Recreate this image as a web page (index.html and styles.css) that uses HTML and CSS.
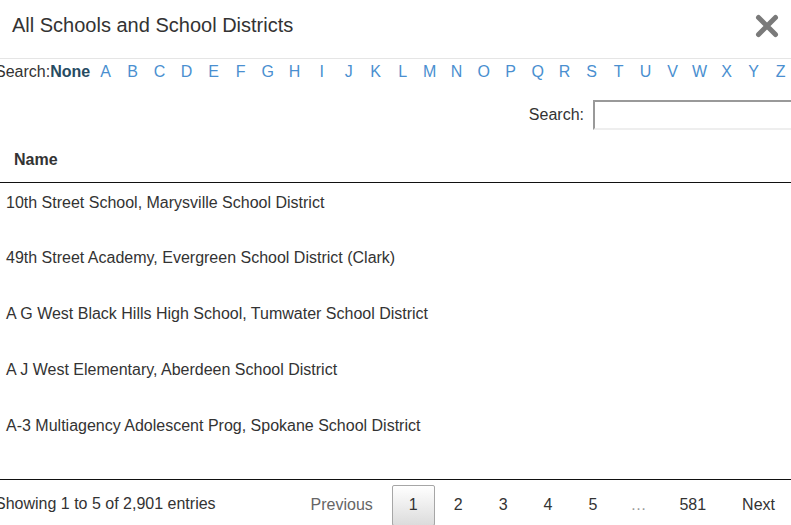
FILE: index.html
```html
<!DOCTYPE html>
<html lang="en">
  <head>
    <meta charset="utf-8">
    <meta name="viewport" content="width=device-width, initial-scale=1.0">
    <title>All Schools and School Districts</title>
    <link rel="stylesheet" href="styles.css">
  </head>
  <body>
    <div class="modal-header">
      <h4 class="modal-title">All Schools and School Districts</h4>
      <a class="close" aria-label="Close">
        <svg width="24" height="24" viewBox="0 0 24 24">
          <path d="M3.5 3.5 L20.5 20.5 M20.5 3.5 L3.5 20.5" stroke="#7a7a7a" stroke-width="5" stroke-linecap="round"/>
        </svg>
      </a>
    </div>
    <div class="modal-body">
      <div class="alpha">
        <span>Search:</span><b class="alpha-none">None</b>
        <div class="alpha-list">
          <a>A</a><a>B</a><a>C</a><a>D</a><a>E</a><a>F</a><a>G</a><a>H</a><a>I</a><a>J</a><a>K</a><a>L</a><a>M</a><a>N</a><a>O</a><a>P</a><a>Q</a><a>R</a><a>S</a><a>T</a><a>U</a><a>V</a><a>W</a><a>X</a><a>Y</a><a>Z</a>
        </div>
      </div>
      <div class="filter">
        <label>Search:<input type="search"></label>
      </div>
      <div class="scroll">
        <table class="data">
          <thead>
            <tr><th>Name</th></tr>
          </thead>
          <tbody>
            <tr><td>10th Street School, Marysville School District</td></tr>
            <tr><td>49th Street Academy, Evergreen School District (Clark)</td></tr>
            <tr><td>A G West Black Hills High School, Tumwater School District</td></tr>
            <tr><td>A J West Elementary, Aberdeen School District</td></tr>
            <tr><td>A-3 Multiagency Adolescent Prog, Spokane School District</td></tr>
          </tbody>
        </table>
      </div>
      <div class="footer">
        <div class="info">Showing 1 to 5 of 2,901 entries</div>
        <div class="paging">
          <a class="pg pg-disabled">Previous</a>
          <a class="pg pg-current">1</a>
          <a class="pg">2</a>
          <a class="pg">3</a>
          <a class="pg">4</a>
          <a class="pg">5</a>
          <span class="ellipsis">…</span>
          <a class="pg">581</a>
          <a class="pg">Next</a>
        </div>
      </div>
    </div>
  </body>
</html>
```

FILE: styles.css
```css
html { box-sizing : border-box }
*, *:before, *:after { box-sizing : inherit }

:root {
  --c-fg : #333;
  --c-link : #4a8fd0;
  --c-none : #274b62;
  --c-line : #e5e5e5;
  --c-rule : #111;

  --f-prop : "Liberation Sans", Arial, sans-serif;
}

body {
  margin : 0;
  width : 791px;
  height : 525px;
  overflow : hidden;
  background-color : #fff;
  color : var(--c-fg);
  font-family : var(--f-prop);
  font-size : 16px;
  line-height : 1.42857;
}

a { cursor : pointer }

/* header */

.modal-header {
  display : flex;
  justify-content : space-between;
  align-items : flex-start;
  height : 59px;
  padding : 11px 12px 0 12px;
  border-bottom : 1px solid var(--c-line);
}

.modal-title {
  margin : 0;
  font-size : 20px;
  font-weight : normal;
  line-height : 28px;
}

.close {
  display : block;
  margin-top : 3px;
  line-height : 0;
}

/* body */

.modal-body {
  margin : 0 -2px 0 -5px;
}

.alpha {
  display : flex;
  margin-top : 3px;
  line-height : 20px;
  white-space : nowrap;
}

.alpha-none {
  color : var(--c-none);
}

.alpha-list {
  display : flex;
  margin-left : 2px;
}

.alpha-list a {
  width : 27px;
  text-align : center;
  color : var(--c-link);
}

.filter {
  display : flex;
  justify-content : flex-end;
  margin-top : 18px;
  height : 30px;
}

.filter label {
  display : flex;
  align-items : center;
}

.filter input {
  width : 200px;
  height : 30px;
  margin : 0 0 0 9px;
  padding : 2px 4px;
  border-style : solid;
  border-width : 2px 1px 2px 2px;
  border-color : #999 #ddd #eee #999;
  font : inherit;
}

.scroll {
  margin-top : 9px;
  padding-bottom : 17px;
  border-bottom : 1px solid var(--c-rule);
}

.data {
  width : 100%;
  border-collapse : collapse;
}

.data th {
  padding : 10px 18px 10px 19px;
  text-align : left;
  font-weight : bold;
  border-bottom : 1px solid var(--c-rule);
}

.data td {
  height : 56px;
  padding : 9px 10px 8px 11px;
  vertical-align : top;
}

/* footer */

.footer {
  display : flex;
  justify-content : space-between;
  align-items : flex-start;
}

.info { padding-top : 13px }

.paging {
  display : flex;
  padding-top : 5px;
  margin-right : 1px;
  white-space : nowrap;
}

.pg {
  display : block;
  margin-left : 2px;
  padding : 8px 16px;
  border : 1px solid transparent;
  border-radius : 2px;
  color : var(--c-fg);
}

.pg-disabled { color : #666 }

.pg-current {
  border-color : #a6a6a6;
  background : linear-gradient(to bottom, #fff 0%, #dcdcdc 100%);
}

.ellipsis {
  display : block;
  margin-left : 2px;
  padding : 9px 14px 0 14px;
  color : #999;
}
```
